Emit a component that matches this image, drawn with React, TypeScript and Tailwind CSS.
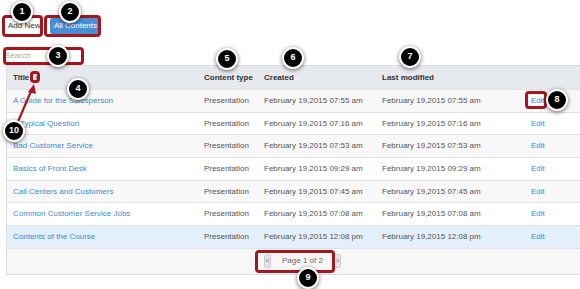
import React from "react";

const rows = [
  { title: "A Guide for the Salesperson", created: "February 19,2015 07:55 am", modified: "February 19,2015 07:55 am" },
  { title: "A Typical Question", created: "February 19,2015 07:16 am", modified: "February 19,2015 07:16 am" },
  { title: "Bad Customer Service", created: "February 19,2015 07:53 am", modified: "February 19,2015 07:53 am" },
  { title: "Basics of Front Desk", created: "February 19,2015 09:29 am", modified: "February 19,2015 09:29 am" },
  { title: "Call Centers and Customers", created: "February 19,2015 07:45 am", modified: "February 19,2015 07:45 am" },
  { title: "Common Customer Service Jobs", created: "February 19,2015 07:08 am", modified: "February 19,2015 07:08 am" },
  { title: "Contents of the Course", created: "February 19,2015 12:08 pm", modified: "February 19,2015 12:08 pm" },
];

const cols = "grid grid-cols-[191px_60px_118px_149px_1fr] items-center pl-[6px] whitespace-nowrap";

// numbered callout over the screenshot
function Badge({ n, x, y }: { n: string; x: number; y: number }) {
  return (
    <div
      className="absolute w-[22px] h-[22px] -ml-[11px] -mt-[11px] rounded-full bg-black border-2 border-white shadow-[0_1px_4px_rgba(0,0,0,0.6)] flex items-center justify-center text-white font-bold text-[9px]"
      style={{ left: x, top: y }}
    >
      {n}
    </div>
  );
}

// red highlight frame
function Box({ x, y, w, h }: { x: number; y: number; w: number; h: number }) {
  return (
    <div
      className="absolute border-[3px] border-[#a3171f] rounded-[4px]"
      style={{ left: x, top: y, width: w, height: h }}
    />
  );
}

export default function App() {
  return (
    <div className="relative w-[580px] h-[289px] bg-white overflow-hidden font-['Liberation_Sans',Arial,sans-serif] text-[8px] text-[#555]">
      {/* toolbar */}
      <div className="flex items-center gap-[10px] pt-[18px] pl-[8px] h-[34px] whitespace-nowrap">
        <span className="text-[#333]">Add New</span>
        <span className="bg-[#4a8fd6] text-white rounded-[2px] h-[16px] w-[50px] flex items-center justify-center">All Contents</span>
      </div>
      <div className="pl-[5px] pt-[15px]">
        <div className="w-[76px] h-[13px] flex items-center text-[#aaa]">Search</div>
      </div>

      {/* table */}
      <div className="mt-[3px] ml-[6px] border-l border-b border-[#dcdcdc]">
        <div className={`${cols} h-[24px] bg-[#e6e9ed] border-t border-[#dcdcdc] font-bold text-[#333]`}>
          <div className="flex items-center gap-[5px]">
            Title
            <span className="w-[5px] h-[6px] bg-[#d6dade] flex items-center justify-center text-[4px] text-[#666]">▼</span>
          </div>
          <div>Content type</div>
          <div>Created</div>
          <div>Last modified</div>
          <div />
        </div>
        {rows.map((r, i) => (
          <div
            key={r.title}
            className={`${cols} h-[22.7px] border-t border-[#e2e2e2] ${
              i === 6 ? "bg-[#e3f0fc]" : i % 2 === 0 ? "bg-[#f8f8f8]" : "bg-white"
            }`}
          >
            <div className="text-[#3f8ad0]">{r.title}</div>
            <div>Presentation</div>
            <div>{r.created}</div>
            <div>{r.modified}</div>
            <div className="text-[#3f8ad0]">Edit</div>
          </div>
        ))}
        <div className="h-[26px] bg-[#f7f7f7] border-t border-[#e2e2e2] flex items-center pl-[257px] gap-[11px]">
          <span className="w-[7px] h-[14px] bg-[#e6e6e6] border border-[#ccc] rounded-[2px] flex items-center justify-center text-[7px] text-[#777]">&lt;</span>
          <span className="text-[#666]">Page 1 of 2</span>
          <span className="w-[7px] h-[14px] bg-[#e6e6e6] border border-[#ccc] rounded-[2px] flex items-center justify-center text-[7px] text-[#777]">&gt;</span>
        </div>
      </div>

      {/* annotations */}
      <Box x={2} y={15} w={41} h={22} />
      <Box x={44} y={15} w={57} h={22} />
      <Box x={3} y={47} w={81} h={18} />
      <Box x={30} y={71} w={10} h={12} />
      <Box x={525} y={91} w={22} h={18} />
      <Box x={255} y={250} w={80} h={23} />

      <svg className="absolute left-0 top-0" width="580" height="289">
        <line x1="17" y1="124" x2="32" y2="89" stroke="#a3171f" strokeWidth="2.2" />
        <polygon points="34,84 28,92 36,94" fill="#a3171f" />
      </svg>

      <Badge n="1" x={22} y={12} />
      <Badge n="2" x={70} y={12} />
      <Badge n="3" x={58} y={56} />
      <Badge n="4" x={78} y={89} />
      <Badge n="5" x={227} y={59} />
      <Badge n="6" x={293} y={58} />
      <Badge n="7" x={410} y={57} />
      <Badge n="8" x={557} y={100} />
      <Badge n="9" x={308} y={278} />
      <Badge n="10" x={14} y={131} />
    </div>
  );
}
